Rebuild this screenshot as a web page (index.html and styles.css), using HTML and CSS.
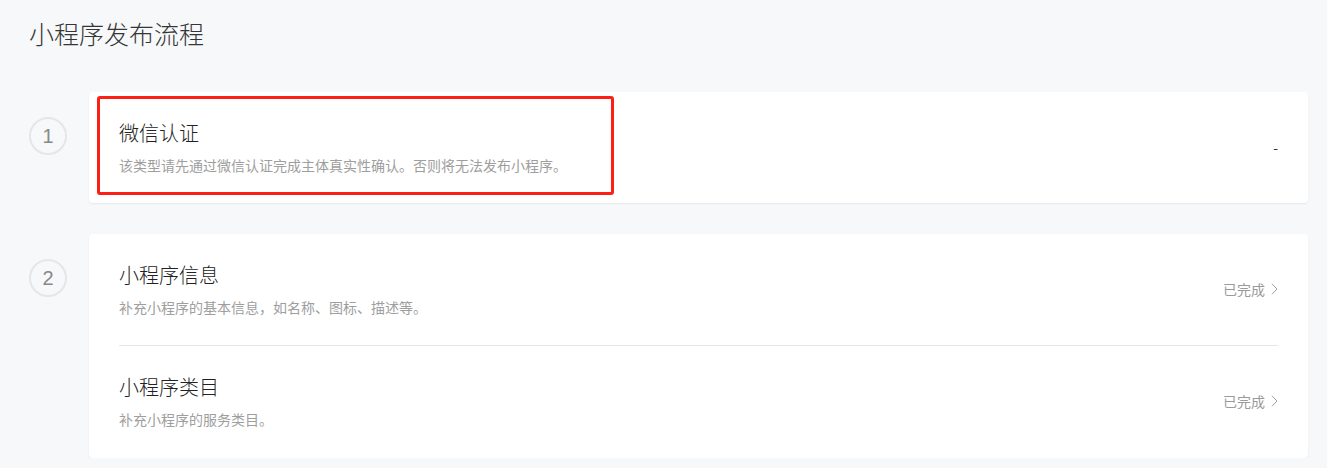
FILE: index.html
```html
<!DOCTYPE html>
<html lang="zh-CN">
<head>
<meta charset="utf-8">
<title>小程序发布流程</title>
<link rel="stylesheet" href="styles.css">
</head>
<body>
<div class="page">
  <h1 class="page-title">小程序发布流程</h1>
  <div class="steps">
    <div class="step">
      <div class="step-num">1</div>
      <div class="card">
        <div class="highlight"></div>
        <div class="row">
          <div class="row-main">
            <div class="row-title">微信认证</div>
            <div class="row-desc">该类型请先通过微信认证完成主体真实性确认。否则将无法发布小程序。</div>
          </div>
          <div class="row-status dark">-</div>
        </div>
      </div>
    </div>
    <div class="step">
      <div class="step-num">2</div>
      <div class="card">
        <div class="row">
          <div class="row-main">
            <div class="row-title">小程序信息</div>
            <div class="row-desc">补充小程序的基本信息，如名称、图标、描述等。</div>
          </div>
          <div class="row-status">已完成<svg class="chev" width="7" height="12" viewBox="0 0 7 12"><path d="M1 0.8 L6 6 L1 11.2" fill="none" stroke="#a0a0a0" stroke-width="1"/></svg></div>
        </div>
        <div class="divider"></div>
        <div class="row">
          <div class="row-main">
            <div class="row-title">小程序类目</div>
            <div class="row-desc">补充小程序的服务类目。</div>
          </div>
          <div class="row-status">已完成<svg class="chev" width="7" height="12" viewBox="0 0 7 12"><path d="M1 0.8 L6 6 L1 11.2" fill="none" stroke="#a0a0a0" stroke-width="1"/></svg></div>
        </div>
      </div>
    </div>
  </div>
</div>
</body>
</html>
```
FILE: styles.css
```css
* { box-sizing: border-box; }
html, body {
  margin: 0;
  padding: 0;
  background: #f7f8fa;
  font-family: "Microsoft YaHei", "Noto Sans CJK SC", "Liberation Sans", sans-serif;
  color: #333;
}
.page {
  padding: 15px 19px 0 29px;
}
.page-title {
  margin: 0;
  font-size: 25px;
  font-weight: 300;
  line-height: 36px;
  color: #353535;
}
.steps {
  margin-top: 41px;
  display: flex;
  flex-direction: column;
  gap: 31px;
}
.step {
  display: flex;
  align-items: flex-start;
  gap: 22px;
}
.step-num {
  flex: none;
  width: 38px;
  height: 38px;
  margin-top: 25px;
  border: 2px solid #e6e6e6;
  border-radius: 50%;
  display: flex;
  align-items: center;
  justify-content: center;
  font-family: "Liberation Sans", "Noto Sans", sans-serif;
  font-size: 20px;
  color: #888;
}
.card {
  position: relative;
  flex: 1;
  background: #fff;
  border-radius: 4px;
  box-shadow: 0 1px 2px rgba(0, 0, 0, 0.07);
  padding: 0 30px;
}
.highlight {
  position: absolute;
  left: 8px;
  top: 4px;
  width: 517px;
  height: 99px;
  border: 3px solid #fb1f16;
  border-radius: 3px;
  pointer-events: none;
}
.row {
  display: flex;
  align-items: center;
  justify-content: space-between;
  padding: 27px 0 28px;
}
.row + .divider + .row {
  padding-bottom: 29px;
}
.row-title {
  font-size: 20px;
  font-weight: 300;
  line-height: 28px;
  color: #222;
}
.row-desc {
  margin-top: 8px;
  font-size: 14px;
  line-height: 20px;
  color: #9e9e9e;
}
.row-status {
  display: flex;
  align-items: center;
  gap: 6px;
  font-size: 14px;
  color: #9a9a9a;
}
.row-status.dark {
  color: #333;
}
.divider {
  height: 1px;
  background: #e6e6e6;
}
.chev {
  display: block;
}
```
